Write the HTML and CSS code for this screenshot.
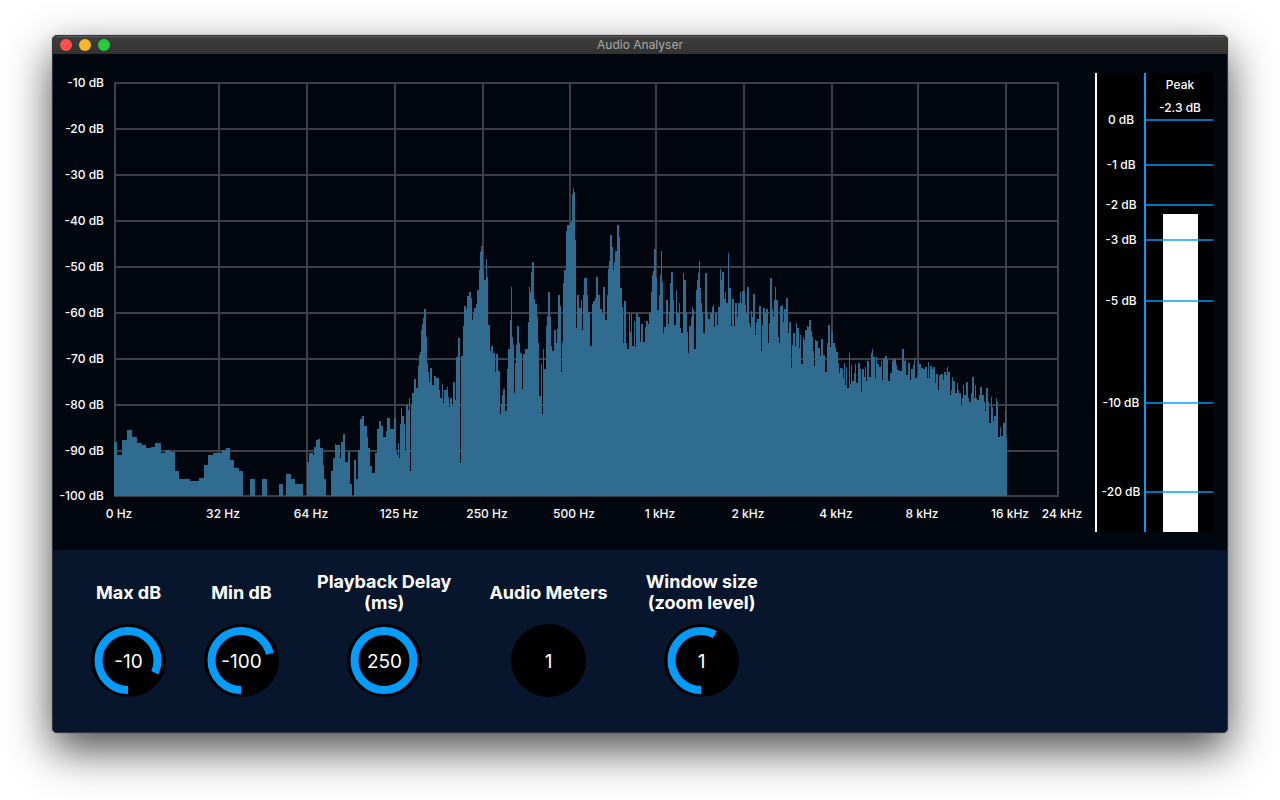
FILE: index.html
```html
<!DOCTYPE html>
<html lang="en">
<head>
  <meta charset="UTF-8">
  <meta name="viewport" content="width=device-width, initial-scale=1.0">
  <title>Audio Analyser</title>
  <link rel="stylesheet" href="styles.css">
</head>
<body>

  <div class="window">
    <header class="titlebar">
      <div class="lights">
        <button class="light close" type="button" aria-label="Close"></button>
        <button class="light minimise" type="button" aria-label="Minimise"></button>
        <button class="light zoom" type="button" aria-label="Zoom"></button>
      </div>
      <h1 class="title">Audio Analyser</h1>
    </header>

    <main class="analyser">
      <!-- Frequency spectrum -->
      <svg class="spectrum" viewBox="58 73 1032 459" role="img" aria-label="Frequency spectrum">
        <g id="grid" class="grid"></g>
        <path id="bars" class="bars"></path>
        <g id="levels" class="labels end"></g>
        <g id="frequencies" class="labels"></g>
      </svg>

      <!-- Peak meter -->
      <svg class="meter" viewBox="0 0 118 459" role="img" aria-label="Peak meter">
        <rect class="meter-back" width="118" height="459"></rect>
        <rect class="meter-edge" width="2" height="459"></rect>
        <rect class="meter-level" x="68" y="141" width="35" height="318"></rect>
        <rect class="meter-axis" x="49" width="2" height="459"></rect>
        <g id="ticks" class="ticks"></g>
        <g id="tick-labels" class="labels">
          <text x="85" y="16">Peak</text>
          <text x="85" y="39">-2.3 dB</text>
        </g>
      </svg>
    </main>

    <section class="controls">
      <div class="control">
        <label for="max-db">Max dB</label>
        <div class="knob">
          <input type="range" id="max-db" min="-100" max="10" value="-10">
        </div>
      </div>
      <div class="control">
        <label for="min-db">Min dB</label>
        <div class="knob">
          <input type="range" id="min-db" min="-200" max="-60" value="-100">
        </div>
      </div>
      <div class="control">
        <label for="delay">Playback Delay<br>(ms)</label>
        <div class="knob">
          <input type="range" id="delay" min="0" max="250" value="250">
        </div>
      </div>
      <div class="control">
        <label for="meters">Audio Meters</label>
        <div class="knob">
          <input type="range" id="meters" min="1" max="8" value="1">
        </div>
      </div>
      <div class="control">
        <label for="window-size">Window size<br>(zoom level)</label>
        <div class="knob">
          <input type="range" id="window-size" min="0" max="1.73" step="0.01" value="1">
        </div>
      </div>
    </section>
  </div>

  <script src="script.js"></script>
</body>
</html>
```

FILE: styles.css
```css
* {
  box-sizing: border-box;
}
body {
  margin: 0;
  padding: 35px 52px 67px;
  background-color: #fff;
  font-family: Inter, "Liberation Sans", sans-serif;
  color: #fff;
}
.window {
  overflow: hidden;
  border: 1px solid #30343c;
  border-radius: 5px;
  background-color: #02060f;
  box-shadow: 0 0 1px rgba(0, 0, 0, 0.6), 0 17px 44px rgba(0, 0, 0, 0.7);
}

/* Title bar */
.titlebar {
  display: grid;
  grid-template-columns: 1fr auto 1fr;
  align-items: center;
  height: 18px;
  padding: 0 7px;
  background: linear-gradient(#3f3f3e, #323230);
  box-shadow: inset 0 1px 0 #5c5c5b;
}
.lights {
  display: flex;
  gap: 7px;
}
.light {
  width: 12px;
  height: 12px;
  padding: 0;
  border: none;
  border-radius: 50%;
}
.close {
  background-color: #ff4f49;
}
.minimise {
  background-color: #fdb62b;
}
.zoom {
  background-color: #27c83e;
}
.title {
  margin: 0;
  font-size: 12px;
  font-weight: 400;
  line-height: 18px;
  color: #a9a9a8;
}

/* Spectrum and meter */
.analyser {
  display: flex;
  align-items: flex-start;
  gap: 5px;
  padding: 19px 14px 18px 5px;
}
.spectrum {
  display: block;
  flex: 1;
  min-width: 0;
}
.meter {
  display: block;
  flex: none;
  width: 118px;
}
.grid {
  stroke: #fff;
  stroke-width: 2;
  stroke-linecap: square;
  opacity: 0.23;
}
.bars {
  fill: #306c90;
}
.labels {
  fill: #fff;
  font-size: 12px;
  font-weight: 500;
  text-anchor: middle;
}
.end {
  text-anchor: end;
}
.meter-back {
  fill: #000;
}
.meter-edge,
.meter-level {
  fill: #fff;
}
.meter-axis {
  fill: #009dff;
}
.ticks {
  stroke: #009dff;
  stroke-width: 2;
  opacity: 0.72;
}

/* Knobs */
.controls {
  display: flex;
  flex-wrap: wrap;
  gap: 38px;
  padding: 21px 38px 35px;
  background-color: #08162d;
}
.control {
  display: flex;
  flex-direction: column;
  align-items: center;
  gap: 11px;
}
.control label {
  display: flex;
  align-items: center;
  height: 42px;
  font-size: 18px;
  font-weight: 700;
  line-height: 21px;
  text-align: center;
}
.knob {
  position: relative;
  width: 75px;
  height: 73px;
}
.knob svg {
  display: block;
}
.knob input {
  position: absolute;
  inset: 0;
  width: 100%;
  height: 100%;
  margin: 0;
  opacity: 0;
  cursor: pointer;
}
.knob-back {
  fill: #000;
}
.knob-arc {
  fill: none;
  stroke: #009dff;
  stroke-width: 8;
}
.knob-value {
  fill: #fff;
  font-size: 19px;
  text-anchor: middle;
}
```

FILE: script.js
```js
// Right edge and top of every bar, the first one starts at x = 114
const spectrum = `
117 442,122 455,127 440,132 430,137 437,142 443,146 445,151 448,155 447,161 443,165 453,170 450,175 452,
179 471,190 479,199 481,204 478,208 465,213 455,222 453,226 450,230 448,234 460,239 468,243 471,250 496,
255 479,262 496,267 479,279 496,283 484,286 496,291 474,295 479,303 484,307 496,309 462,313 453,314 455,
316 447,318 440,320 439,323 448,324 465,326 479,331 496,333 471,335 458,336 444,340 445,341 458,343 442,
345 434,348 462,350 452,352 484,354 496,356 460,358 479,360 450,362 419,364 416,367 426,368 437,370 448,
372 466,375 473,377 453,379 429,381 421,383 426,386 437,387 431,390 418,394 429,396 418,397 452,398 455,
399 443,400 458,401 424,402 408,404 416,405 424,406 450,408 405,409 410,410 398,411 471,412 406,414 393,
416 379,418 388,419 366,420 355,421 352,422 330,423 324,424 318,426 309,427 337,428 363,429 372,430 382,
432 368,434 385,436 376,439 378,440 390,442 398,443 385,444 403,447 390,448 387,449 397,450 407,452 398,
453 406,455 382,456 400,458 357,460 338,461 463,463 356,464 326,466 306,467 309,469 296,471 292,472 298,
473 320,474 313,476 308,477 304,479 290,480 270,481 252,482 246,483 251,484 270,486 280,487 259,488 277,
490 325,491 351,493 346,495 353,496 372,498 354,500 371,501 414,502 404,503 395,505 389,507 411,508 369,
510 349,511 320,512 287,513 337,514 345,515 393,516 363,517 345,519 326,520 343,522 353,523 389,525 354,
528 349,529 322,530 287,531 292,532 272,534 262,535 299,537 304,538 317,539 343,541 396,542 364,543 414,
544 349,546 369,547 326,548 316,550 292,551 317,552 346,554 351,556 330,557 343,558 329,560 295,561 306,
562 372,563 342,564 283,566 270,567 231,570 225,572 222,573 194,574 188,575 192,576 240,577 328,579 295,
581 308,582 300,583 330,584 295,587 278,588 295,590 312,592 346,593 304,595 301,596 298,598 277,600 295,
602 309,603 314,605 287,607 320,608 295,609 269,610 261,612 235,613 247,614 270,615 262,617 251,619 225,
620 237,622 288,623 307,624 343,626 301,627 343,629 349,630 313,631 332,632 314,634 346,635 321,636 347,
638 313,640 317,641 342,643 324,645 342,646 327,648 321,649 324,651 313,652 292,653 275,654 271,656 249,
657 278,659 310,660 295,661 275,662 251,663 282,664 333,666 327,668 300,669 324,670 312,671 283,673 272,
674 300,676 325,677 290,679 313,680 303,681 328,683 333,684 273,686 280,687 313,688 332,689 353,691 326,
692 317,693 307,694 310,696 349,697 290,698 280,699 273,700 261,701 288,702 303,703 312,705 333,707 273,
708 313,710 319,712 313,713 307,714 305,715 327,717 313,718 325,720 307,721 269,722 280,724 272,725 299,
726 292,728 303,729 253,731 288,732 326,734 299,735 326,737 303,738 317,740 303,741 292,742 303,745 291,
746 305,747 314,749 287,750 323,751 327,752 311,753 317,755 294,756 335,757 322,759 319,761 306,762 351,
763 325,765 308,766 313,768 309,769 343,770 323,772 278,773 309,774 317,775 300,776 287,778 300,779 337,
780 343,782 306,783 305,784 322,786 309,788 298,789 333,791 322,792 368,793 345,795 333,796 346,797 323,
799 328,800 348,801 335,803 364,804 337,805 340,807 330,808 326,809 327,811 320,812 331,813 337,814 351,
815 366,816 340,818 341,820 348,821 356,823 339,825 355,827 372,828 343,830 325,831 347,833 332,835 343,
836 347,838 352,839 363,840 373,842 368,843 369,844 378,845 363,846 385,847 367,849 388,850 353,851 384,
852 365,854 381,855 373,856 364,858 383,860 363,861 369,862 392,864 369,865 377,866 367,867 381,869 361,
871 377,872 353,873 349,875 357,876 378,877 357,879 364,881 367,882 361,883 380,885 358,887 356,888 360,
890 381,892 373,893 361,896 359,897 365,899 370,902 371,904 349,905 361,906 360,908 375,910 363,911 380,
913 369,914 365,915 358,918 378,919 361,921 364,923 368,925 369,927 367,928 378,929 362,930 378,932 366,
933 369,935 367,936 383,938 374,939 390,941 375,943 374,944 380,946 372,947 375,948 367,950 372,951 395,
952 390,953 377,955 381,957 393,958 383,959 390,961 393,962 406,963 398,964 385,966 395,968 382,969 398,
971 402,972 393,974 377,975 398,976 385,977 398,979 400,980 395,982 387,984 395,985 402,986 411,988 388,
989 402,991 423,992 397,993 407,994 421,996 416,997 398,998 402,1000 437,1001 427,1003 436,1005 423,
1006 411,1007 438`;

const svgNs = 'http://www.w3.org/2000/svg';

function add(parent, tag, attributes, text) {
  const element = document.createElementNS(svgNs, tag);
  Object.keys(attributes).forEach(key => element.setAttribute(key, attributes[key]));
  if (text) {
    element.textContent = text;
  }
  parent.appendChild(element);
  return element;
}

const byId = id => document.getElementById(id);

// Spectrum grid and its labels
const levelRows = [83, 129, 175, 221, 267, 313, 359, 405, 451, 496];
levelRows.forEach((y, i) => {
  add(byId('grid'), 'line', { x1: 115, y1: y, x2: 1058, y2: y });
  add(byId('levels'), 'text', { x: 104, y: y + 4 }, `-${(i + 1) * 10} dB`);
});

const frequencyColumns = [
  [115, '0 Hz'], [219, '32 Hz'], [307, '64 Hz'], [395, '125 Hz'],
  [483, '250 Hz'], [570, '500 Hz'], [656, '1 kHz'], [744, '2 kHz'],
  [832, '4 kHz'], [918, '8 kHz'], [1006, '16 kHz'], [1058, '24 kHz']
];
frequencyColumns.forEach(([x, name]) => {
  add(byId('grid'), 'line', { x1: x, y1: 83, x2: x, y2: 496 });
  add(byId('frequencies'), 'text', { x: x + 4, y: 518 }, name);
});

const steps = spectrum.trim().split(',').map(pair => {
  const [x, y] = pair.trim().split(' ');
  return `V${y}H${x}`;
});
byId('bars').setAttribute('d', `M114 496${steps.join('')}V496Z`);

// Meter scale
const meterTicks = [[47, '0 dB'], [92, '-1 dB'], [132, '-2 dB'], [167, '-3 dB'], [228, '-5 dB'], [330, '-10 dB'], [419, '-20 dB']];
meterTicks.forEach(([y, name]) => {
  add(byId('ticks'), 'line', { x1: 51, y1: y, x2: 118, y2: y });
  add(byId('tick-labels'), 'text', { x: 26, y: y + 4 }, name);
});

// Knobs start at the bottom and fill clockwise
document.querySelectorAll('.knob').forEach(knob => {
  const input = knob.querySelector('input');
  const svg = add(knob, 'svg', { width: 75, height: 73, 'aria-hidden': 'true' });
  add(svg, 'ellipse', { class: 'knob-back', cx: 37.5, cy: 36.5, rx: 37.5, ry: 36.5 });
  const arc = add(svg, 'circle', { class: 'knob-arc', cx: 37, cy: 36.5, r: 29.5, pathLength: 360, transform: 'rotate(90 37 36.5)' });
  const value = add(svg, 'text', { class: 'knob-value', x: 37.5, y: 44 });

  function update() {
    const angle = 360 * (input.value - input.min) / (input.max - input.min);
    arc.setAttribute('stroke-dasharray', `${angle} 360`);
    arc.setAttribute('visibility', angle > 0 ? 'visible' : 'hidden');
    value.textContent = input.value;
  }
  input.addEventListener('input', update);
  update();
});
```
